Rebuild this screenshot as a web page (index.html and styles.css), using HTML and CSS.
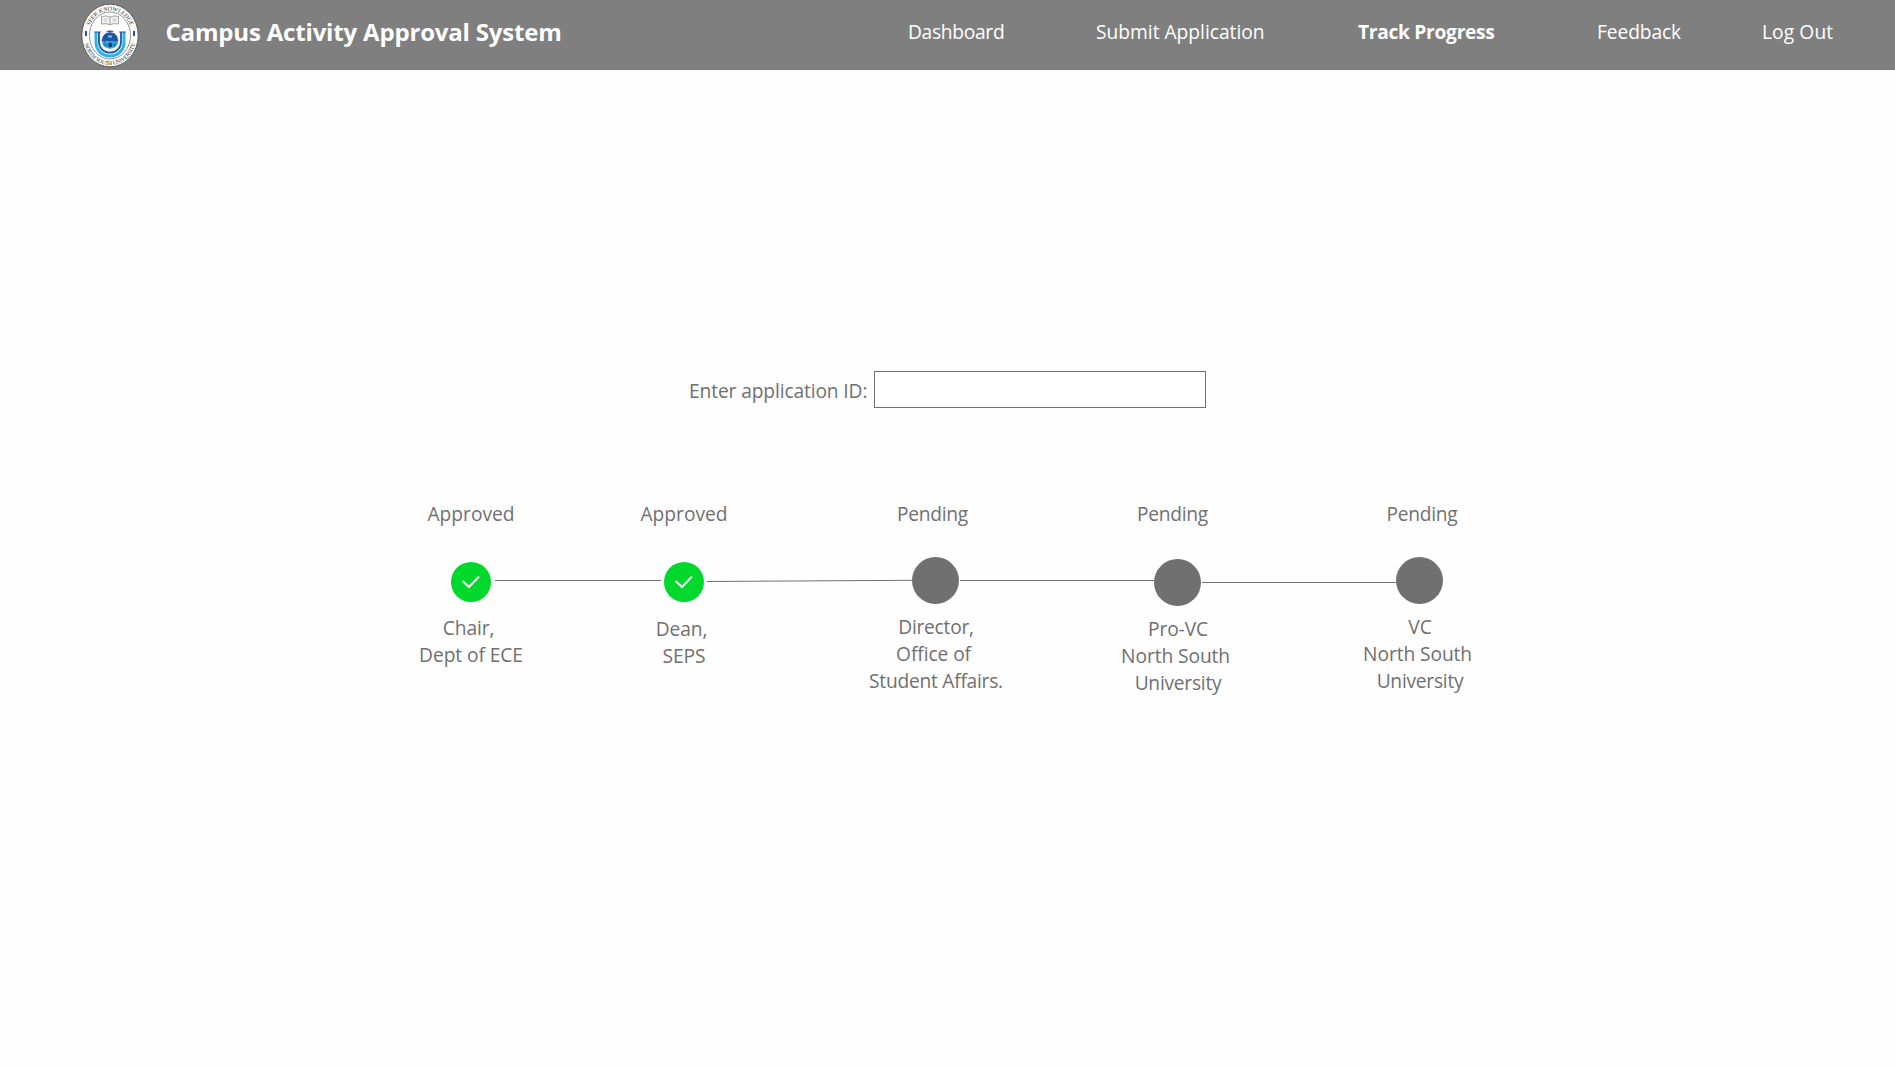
FILE: index.html
```html
<!DOCTYPE html>
<html lang="en">
<head>
<meta charset="utf-8">
<title>Campus Activity Approval System</title>
<link rel="stylesheet" href="styles.css">
</head>
<body>
<header class="topbar">
  <svg class="logo" width="58" height="64" viewBox="0 0 58 64" role="img" aria-label="North South University">
    <defs>
      <path id="arc-top" d="M7.200 31.500A21.800 25 0 0 1 50.800 31.500"/>
      <path id="arc-bottom" d="M2.500 31.500A26.500 29.500 0 0 0 55.500 31.500"/>
      <clipPath id="globe"><circle cx="29" cy="36.500" r="8.300"/></clipPath>
    </defs>
    <ellipse cx="29" cy="31.500" rx="28.200" ry="31.300" fill="#fff" stroke="#444" stroke-width=".8"/>
    <ellipse cx="29" cy="31.500" rx="20.500" ry="23.500" fill="#fff" stroke="#777" stroke-width=".8"/>
    <text class="seal-text"><textPath href="#arc-top" startOffset="50%" text-anchor="middle">SEEK KNOWLEDGE</textPath></text>
    <text class="seal-text bottom"><textPath href="#arc-bottom" startOffset="50%" text-anchor="middle">NORTH SOUTH UNIVERSITY</textPath></text>
    <path d="M5 27v5M53 27v5" stroke="#2450a4" stroke-width="2"/>
    <path d="M20.500 12.500q5-1.500 8.500.7q3.500-2.200 8.500-.7v7.500q-5-1-8.500.7q-3.500-1.700-8.500-.7zM29 13.200v7.500" fill="#f4f4f4" stroke="#888" stroke-width=".8"/>
    <path d="M22.500 15h4M22.500 17h4M31.500 15h4M31.500 17h4" stroke="#aaa" stroke-width=".7"/>
    <path d="M15 28v10.500a14 13.500 0 0 0 28 0V28" fill="none" stroke="#29b4ee" stroke-width="3"/>
    <path d="M18 28v10a11 10.700 0 0 0 22 0V28" fill="none" stroke="#2053a8" stroke-width="1.800"/>
    <path d="M13.300 28h6.500M38.200 28h6.500" stroke="#2053a8" stroke-width="1.200"/>
    <g clip-path="url(#globe)">
      <path d="M20 27h18v10H20z" fill="#2158a6"/>
      <path d="M20 37h18v9H20z" fill="#2ea6df"/>
      <path d="M21 32.500h16M20 41h18M29 28v17M25 28q-3 8 0 17M33 28q3 8 0 17" fill="none" stroke="#174b85" stroke-width=".5"/>
      <path d="M27 31.500h4v2h-4z" fill="#7db8e6"/>
      <path d="M27.500 39h3.500v4h-3.500z" fill="#173f70"/>
    </g>
    <path d="M25.500 28l.5-1.500 1 1 1-1.500 1 1 1-1 1 1.500 1-1 .5 1.500z" fill="#456"/>
  </svg>
  <h1 class="title">Campus Activity Approval System</h1>
  <nav class="menu">
    <a class="menu-item dashboard">Dashboard</a>
    <a class="menu-item submit">Submit Application</a>
    <a class="menu-item track active">Track Progress</a>
    <a class="menu-item feedback">Feedback</a>
    <a class="menu-item logout">Log Out</a>
  </nav>
</header>
<main>
  <form class="lookup">
    <label class="lookup-label" for="app-id">Enter application ID:</label>
    <input class="lookup-input" id="app-id" type="text">
  </form>
  <section class="progress">
    <div class="labels statuses">
      <p class="approved">Approved</p>
      <p class="approved">Approved</p>
      <p class="shifted">Pending</p>
      <p class="shifted-more">Pending</p>
      <p class="shifted-right">Pending</p>
    </div>
    <div class="rail">
      <svg class="done" width="40" height="40" viewBox="0 0 40 40"><circle cx="20" cy="20" r="20"/><path d="M11.500 19l6.500 6 10-10.500"/></svg>
      <svg class="link first" width="166" height="4"><path d="M0 1.500H166"/></svg>
      <svg class="done" width="40" height="40" viewBox="0 0 40 40"><circle cx="20" cy="20" r="20"/><path d="M11.500 19l6.500 6 10-10.500"/></svg>
      <svg class="link second" width="205" height="4"><path d="M0 2.500L205 1.300"/></svg>
      <span class="todo"></span>
      <svg class="link third" width="194" height="4"><path d="M0 1.500H194"/></svg>
      <span class="todo low"></span>
      <svg class="link fourth" width="194" height="4"><path d="M0 3.500H194"/></svg>
      <span class="todo"></span>
    </div>
    <div class="labels roles">
      <p class="one">Chair,&nbsp;<br>Dept of ECE</p>
      <p class="two">Dean,&nbsp;<br>SEPS</p>
      <p><span class="tight">Director,</span><br>Office of&nbsp;<br><span class="tight">Student Affairs.</span></p>
      <p class="two">Pro-VC<br>North South&nbsp;<br><span class="tight">University</span></p>
      <p>VC<br>North South&nbsp;<br><span class="tight">University</span></p>
    </div>
  </section>
</main>
</body>
</html>
```
FILE: styles.css
```css
* { box-sizing: border-box; }
body {
  margin: 0;
  background: #fefefe;
  color: #707070;
  font: 19.2px/27px "Segoe UI", "Open Sans", "Noto Sans", sans-serif;
  letter-spacing: -0.3px;
}
p, h1 { margin: 0; }
.topbar {
  display: flex;
  height: 70px;
  padding: 4px 0 0 80.5px;
  background: #7f7f7f;
  color: #fff;
}
.logo { flex: none; }
.seal-text { font: 6px "Liberation Serif", serif; fill: #333; letter-spacing: -0.1px; }
.seal-text.bottom { font-size: 5.7px; letter-spacing: -0.2px; }
.title {
  width: 742px;
  padding: 11px 0 0 27px;
  font-size: 24px;
  line-height: 34px;
  font-weight: 700;
  letter-spacing: -0.18px;
  white-space: nowrap;
}
.menu { display: flex; padding-top: 14px; margin-left: 27.5px; white-space: nowrap; }
.dashboard { width: 188px; }
.submit { width: 262px; letter-spacing: 0; }
.track { width: 239px; }
.feedback { width: 165px; letter-spacing: -0.1px; }
.logout { letter-spacing: 0.1px; }
.active { font-weight: 700; letter-spacing: -0.3px; }
.lookup {
  display: flex;
  width: 517px;
  height: 37px;
  margin: 301px 0 0 689px;
}
.lookup-label {
  width: 185px;
  padding-top: 6px;
  letter-spacing: -0.12px;
  white-space: nowrap;
}
.lookup-input {
  width: 332px;
  height: 37px;
  border: 1px solid #707070;
  background: #fff;
}
.progress { width: 1109px; margin: 92px 0 0 391px; }
.labels {
  display: grid;
  grid-template-columns: 160px 53px 160px 92px 160px 82px 160px 82px 160px;
  text-align: center;
  white-space: nowrap;
}
.labels p:nth-child(2) { grid-column: 3; }
.labels p:nth-child(3) { grid-column: 5; }
.labels p:nth-child(4) { grid-column: 7; }
.labels p:nth-child(5) { grid-column: 9; }
.approved { letter-spacing: 0; }
.shifted { margin-left: -7px; }
.shifted-more { margin-left: -11px; }
.shifted-right { margin-left: 4px; }
.rail {
  display: flex;
  align-items: flex-start;
  height: 49px;
  margin-top: 30px;
  padding-left: 60px;
}
.rail > * { flex: none; }
.done { margin-top: 5px; fill: #00d82c; }
.done path { fill: none; stroke: #fff; stroke-width: 2; }
.todo { width: 47px; height: 47px; border-radius: 50%; background: #707070; }
.low { margin-top: 2px; }
.link { margin-top: 22px; stroke: #707070; }
.first { margin-left: 4px; margin-right: 3px; }
.second { margin-left: 3px; }
.third { margin-left: 1px; }
.fourth { margin-left: 1px; }
.roles { margin-top: 7px; letter-spacing: -0.08px; }
.roles .one { padding-top: 1px; }
.roles .two { padding-top: 2px; }
.tight { letter-spacing: -0.25px; }
```
